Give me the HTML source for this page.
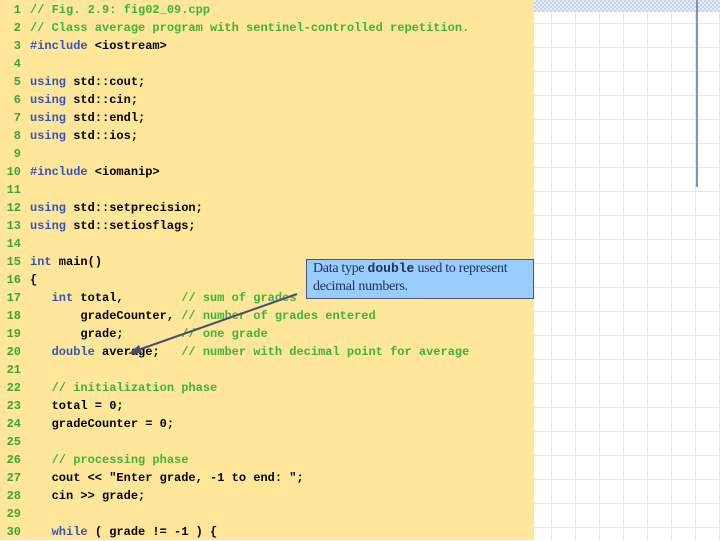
<!DOCTYPE html>
<html><head><style>
body{margin:0;width:720px;height:540px;overflow:hidden;background:#fff;position:relative}
#grid{position:absolute;left:534px;top:0;width:186px;height:540px;
background-image:
repeating-linear-gradient(to bottom,transparent 0 23px,#e6e6e6 23px 24px),
repeating-linear-gradient(to right,transparent 0 17px,#e6e6e6 17px 18px,transparent 18px 24px);}
#band{position:absolute;left:534px;top:0;width:186px;height:12px;
background:repeating-conic-gradient(#c4d2ee 0 25%,#e8eef9 0 50%) 0 0/4px 4px}
#vl{position:absolute;left:696px;top:0;width:2px;height:187px;background:#8393b8}
#code{position:absolute;left:0;top:0;width:534px;height:540px;background:#ffe699}
.l{position:absolute;left:0;height:18px;font:bold 12px/18px "Liberation Mono",monospace;white-space:pre;color:#000}
.n{display:inline-block;width:21px;text-align:right;color:#3aa63a;margin-right:9px}
.c{color:#3cb43c}.k{color:#3355bb}
#box{position:absolute;left:306px;top:259px;background:#99ccff;border:1px solid #445577;
font:14px/18px "Liberation Serif",serif;color:#223355;padding:0 0 0 6px;box-sizing:border-box;width:228px;height:40px;white-space:nowrap;letter-spacing:-0.3px}
#box b{font:bold 13px "Liberation Mono",monospace;color:#223355;letter-spacing:0}
svg{position:absolute;left:0;top:0}
</style></head><body>
<div id="grid"></div><div id="band"></div><div id="vl"></div>
<div id="code">
<div class="l" style="top:1px"><span class="n">1</span><span class="c">// Fig. 2.9: fig02_09.cpp</span></div>
<div class="l" style="top:19px"><span class="n">2</span><span class="c">// Class average program with sentinel-controlled repetition.</span></div>
<div class="l" style="top:37px"><span class="n">3</span><span class="k">#include</span> &lt;iostream&gt;</div>
<div class="l" style="top:55px"><span class="n">4</span></div>
<div class="l" style="top:73px"><span class="n">5</span><span class="k">using</span> std::cout;</div>
<div class="l" style="top:91px"><span class="n">6</span><span class="k">using</span> std::cin;</div>
<div class="l" style="top:109px"><span class="n">7</span><span class="k">using</span> std::endl;</div>
<div class="l" style="top:127px"><span class="n">8</span><span class="k">using</span> std::ios;</div>
<div class="l" style="top:145px"><span class="n">9</span></div>
<div class="l" style="top:163px"><span class="n">10</span><span class="k">#include</span> &lt;iomanip&gt;</div>
<div class="l" style="top:181px"><span class="n">11</span></div>
<div class="l" style="top:199px"><span class="n">12</span><span class="k">using</span> std::setprecision;</div>
<div class="l" style="top:217px"><span class="n">13</span><span class="k">using</span> std::setiosflags;</div>
<div class="l" style="top:235px"><span class="n">14</span></div>
<div class="l" style="top:253px"><span class="n">15</span><span class="k">int</span> main()</div>
<div class="l" style="top:271px"><span class="n">16</span>{</div>
<div class="l" style="top:289px"><span class="n">17</span>   <span class="k">int</span> total,        <span class="c">// sum of grades</span></div>
<div class="l" style="top:307px"><span class="n">18</span>       gradeCounter, <span class="c">// number of grades entered</span></div>
<div class="l" style="top:325px"><span class="n">19</span>       grade;        <span class="c">// one grade</span></div>
<div class="l" style="top:343px"><span class="n">20</span>   <span class="k">double</span> average;   <span class="c">// number with decimal point for average</span></div>
<div class="l" style="top:361px"><span class="n">21</span></div>
<div class="l" style="top:379px"><span class="n">22</span>   <span class="c">// initialization phase</span></div>
<div class="l" style="top:397px"><span class="n">23</span>   total = 0;</div>
<div class="l" style="top:415px"><span class="n">24</span>   gradeCounter = 0;</div>
<div class="l" style="top:433px"><span class="n">25</span></div>
<div class="l" style="top:451px"><span class="n">26</span>   <span class="c">// processing phase</span></div>
<div class="l" style="top:469px"><span class="n">27</span>   cout &lt;&lt; "Enter grade, -1 to end: ";</div>
<div class="l" style="top:487px"><span class="n">28</span>   cin &gt;&gt; grade;</div>
<div class="l" style="top:505px"><span class="n">29</span></div>
<div class="l" style="top:523px"><span class="n">30</span>   <span class="k">while</span> ( grade != -1 ) {</div>
</div>
<svg width="720" height="540">
<line x1="297" y1="294" x2="138" y2="350" stroke="#45507a" stroke-width="2"/>
<polygon points="128,354 139,345 142,353" fill="#45507a"/>
</svg>
<div id="box">Data type <b>double</b> used to represent<br>decimal numbers.</div>
</body></html>
